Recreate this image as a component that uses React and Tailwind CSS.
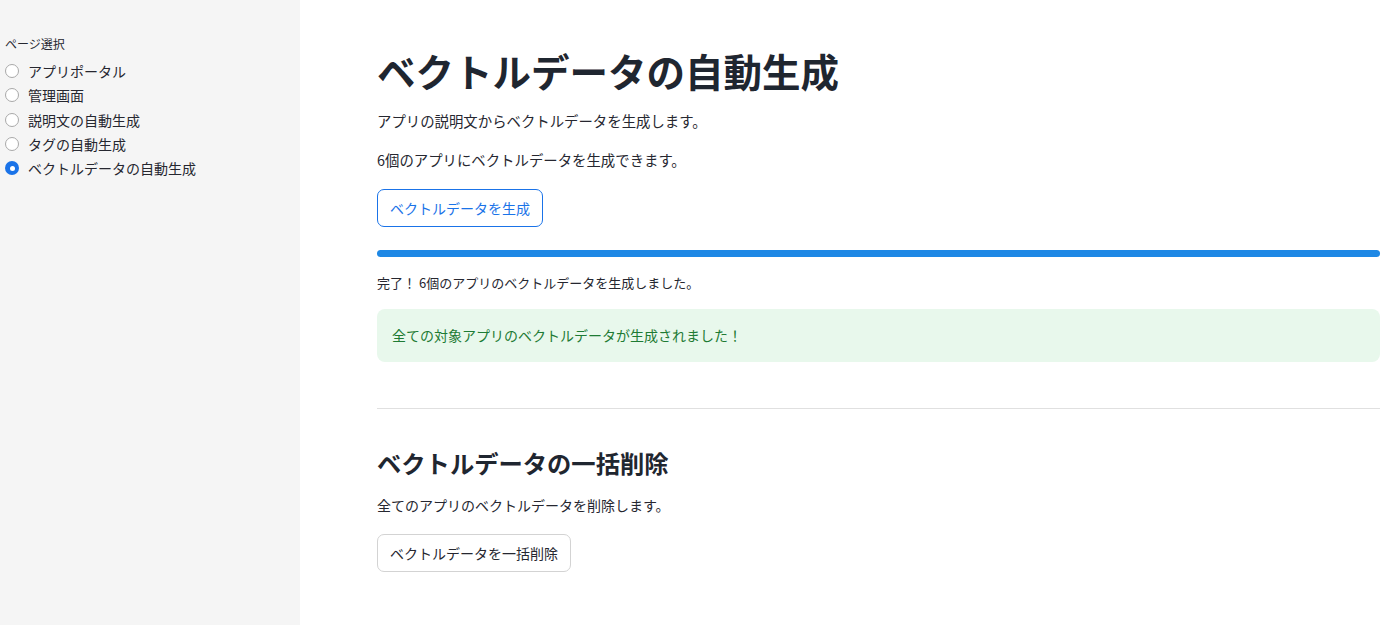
import React from "react";

const font = { fontFamily: '"Noto Sans CJK JP", "Noto Sans", sans-serif' };

function Radio({ label, checked }) {
  return (
    <div className="flex h-[24.25px] items-center gap-[9px] pl-[5px]">
      {checked ? (
        <span className="flex h-[14px] w-[14px] items-center justify-center rounded-full bg-[#1a73e8]">
          <span className="h-[5px] w-[5px] rounded-full bg-white" />
        </span>
      ) : (
        <span className="h-[14px] w-[14px] rounded-full border border-[#a9a9a9] bg-white" />
      )}
      <span className="text-[14px] leading-none text-[#262730]">{label}</span>
    </div>
  );
}

export default function App() {
  return (
    <div className="flex h-[625px] w-full bg-white" style={font}>
      <aside className="w-[300px] shrink-0 bg-[#f5f5f5] pt-[36px]">
        <div className="pl-[5px] text-[12px] leading-[16px] text-[#262730]">ページ選択</div>
        <div className="mt-[7px] flex flex-col">
          <Radio label="アプリポータル" />
          <Radio label="管理画面" />
          <Radio label="説明文の自動生成" />
          <Radio label="タグの自動生成" />
          <Radio label="ベクトルデータの自動生成" checked />
        </div>
      </aside>
      <main className="flex-1 pl-[77px] pr-[20px] text-[#262730]">
        <h1 className="mt-[44px] text-[38.5px] font-bold leading-[52px] text-[#1f2630]">
          ベクトルデータの自動生成
        </h1>
        <p className="mt-[15px] text-[14.4px] leading-[20px]">アプリの説明文からベクトルデータを生成します。</p>
        <p className="mt-[19px] text-[14.4px] leading-[20px]">6個のアプリにベクトルデータを生成できます。</p>
        <button className="mt-[19px] flex h-[38px] items-center rounded-[7px] border border-[#1a73e8] bg-white px-[12px] text-[14px] text-[#1a73e8]">
          ベクトルデータを生成
        </button>
        <div className="mt-[23px] h-[7px] w-full rounded-full bg-[#1e88e5]" />
        <p className="mt-[17px] text-[13px] leading-[18px]">完了！ 6個のアプリのベクトルデータを生成しました。</p>
        <div className="mt-[17px] flex h-[53px] items-center rounded-[8px] bg-[#e8f8ec] px-[15px] text-[14px] text-[#1e7b34]">
          全ての対象アプリのベクトルデータが生成されました！
        </div>
        <hr className="mt-[46px] border-t border-[#e0e0e0]" />
        <h2 className="mt-[38px] text-[24.3px] font-semibold leading-[32px] text-[#1f2630]">
          ベクトルデータの一括削除
        </h2>
        <p className="mt-[16px] text-[14px] leading-[20px]">全てのアプリのベクトルデータを削除します。</p>
        <button className="mt-[19px] flex h-[38px] items-center rounded-[7px] border border-[#d3d3d3] bg-white px-[12px] text-[14px] text-[#262730]">
          ベクトルデータを一括削除
        </button>
      </main>
    </div>
  );
}
